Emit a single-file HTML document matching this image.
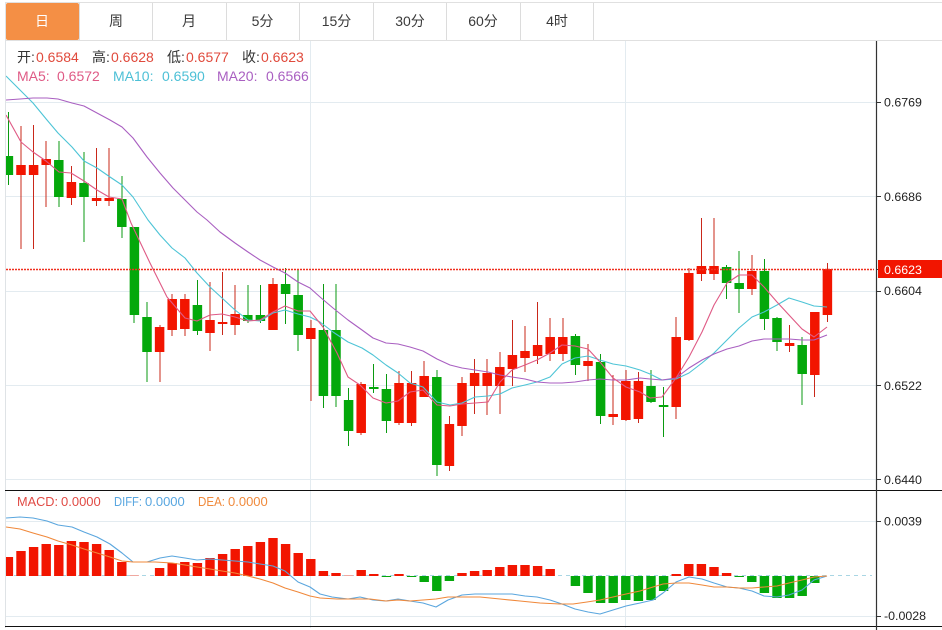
<!DOCTYPE html>
<html><head><meta charset="utf-8">
<style>
html,body{margin:0;padding:0;background:#fff;width:942px;height:630px;overflow:hidden}
svg{display:block;position:absolute;left:0;top:0}
text{font-family:"Liberation Sans","Noto Sans CJK SC",sans-serif}
.t{font-size:14px;fill:#3a3a3a;text-anchor:middle}
.l{font-size:14px}
.m{font-size:13px}
.a{font-size:12.4px;fill:#222}
.n{fill:none;stroke-width:1.1;stroke-linejoin:round}
</style></head><body>
<svg width="942" height="630" viewBox="0 0 942 630" xmlns="http://www.w3.org/2000/svg">
<defs><clipPath id="c"><rect x="6" y="41" width="870" height="589"/></clipPath></defs>
<!-- tabs -->
<path d="M5 2.500H942M5 40.500H942" stroke="#e0e0e0" stroke-width="1" fill="none"/>
<path d="M5.500 3V628" stroke="#dfe3e6" stroke-width="1" fill="none"/>
<rect x="6" y="3" width="73" height="37" rx="2" fill="#f48f45"/>
<path d="M79.500 3V40M152.500 3V40M226.500 3V40M299.500 3V40M373.500 3V40M446.500 3V40M520.500 3V40M593.500 3V40" stroke="#dcdcdc" stroke-width="1" fill="none"/>
<text x="42" y="26" class="t" style="fill:#fff">日</text>
<text x="116" y="26" class="t">周</text>
<text x="189" y="26" class="t">月</text>
<text x="262.500" y="26" class="t">5分</text>
<text x="336.500" y="26" class="t">15分</text>
<text x="410" y="26" class="t">30分</text>
<text x="483" y="26" class="t">60分</text>
<text x="557" y="26" class="t">4时</text>
<!-- grid -->
<path d="M6 102.500H876M6 196.500H876M6 291.500H876M6 385.500H876M6 479.500H876M6 521.500H876M6 616.500H876M310.500 41V628M625.500 41V628" stroke="#e3ebf0" stroke-width="1" fill="none"/>
<g clip-path="url(#c)">
<!-- wicks -->
<path fill="none" stroke="#0a9a10" stroke-width="1" d="M8.500 112V185M59 141V207M84 152V242M122 176V238M134 227V323M147 302V382M185.500 269V270M197.500 280V335M248 285V323M260.500 285V323M285.500 268V324M298 269V351M323.500 284V408M336 284V407M348.500 388V446M373.500 364V393M386.500 374V433M437 370V476M575.500 334V375M600.500 354V424M651 370V403M663.500 387V437M726.500 265V299M739 251V313M764.500 259V330M777 317V351M802 337V405"/>
<path fill="none" stroke="#c9281a" stroke-width="1" d="M21 126V249M33.500 125V249M46 141V207M71.500 166V205M96.500 148V206M109 148V206M160 325V382M172 294V336M185 294V336M210 282V351M222.500 272V335M235 285V335M273 278V330M311 320V401M361 382V435M399 371V425M411.500 371V426M424 361V397M449.500 416V471M462 377V436M474.500 359V414M487 359V415M500 352V414M512.500 320V386M525 326V372M537.500 302V364M550 318V361M563 318V361M588 344V381M613 375V425M626 370V421M638.500 372V423M676 317V419M689 268V341M701.500 218V281M714 218V280M752 255V295M789.500 325V352M814.500 312V397M827.500 263V322"/>
<!-- bodies -->
<path fill="none" stroke="#04a80b" stroke-width="9.500" d="M8.400 156V175M58.800 160V197M84 183V197M121.800 199V227M134.400 227V315M147 317V352M197.400 305V331M247.800 315V321M260.400 315V321M285.600 284V294M298.200 295V335M323.400 330V396M336 330V396M348.600 400V431M373.800 387V389M386.400 389V421M436.800 377V465M575.400 336V365M600.600 362V416M651 386V402M663.600 405V407M726.600 267V283M739.200 283V289M764.400 271V319M777 318V342M802.200 345V374"/>
<path fill="none" stroke="#f21500" stroke-width="9.500" d="M21 165V175M33.600 165V175M46.200 159V165M71.400 182V198M96.600 198V201M109.200 198V201M159.600 327V352M172.200 299V330M184.800 299V329M210 320V333M222.600 322V324M235.200 314V325M273 284V330M310.800 328V339M361.200 384V433M399 383V423M411.600 383V423M424.200 376V397M449.400 424V466M462 383V426M474.600 373V386M487.200 373V386M499.800 367V386M512.400 355V369M525 351V358M537.600 345V356M550.200 337V354M562.800 337V354M588 361V366M613.200 414V417M625.800 381V420M638.400 381V419M676.200 337V407M688.800 273V340M701.400 266V274M714 266V274M751.800 271V289M789.600 343V346M814.800 312V375M827.400 269V315"/>
<!-- MA -->
<polyline class="n" stroke="#4dc4d6" points="6,76 20,90 33,103 47,120 58,133 72,147 84,161 97,168 110,177 122,185 133,197 148,220 160,235 172,248 185,258 197,273 210,287 222,298 235,310 248,320 260,321 273,313 285,310 298,314 310,317 320,322 333,332 348,342 362,348 373,355 386,365 398,373 410,383 423,387 437,402 450,405 462,403 475,397 488,396 500,394 512,388 525,385 537,382 550,377 562,364 575,358 588,356 600,360 613,364 626,366 640,370 650,374 662,380 676,379 689,373 702,363 714,353 727,340 739,328 752,317 764,312 777,305 789,298 802,302 814,306 827,307"/>
<polyline class="n" stroke="#a95fc1" points="6,100 20,99 33,98 47,98 58,99 72,103 84,106 97,113 110,120 122,127 133,138 147,157 160,173 173,188 185,200 197,212 207,220 220,232 235,243 248,252 260,260 273,267 285,273 298,282 310,288 320,297 333,308 348,320 362,330 373,338 386,343 398,344 410,347 423,351 437,359 450,365 462,368 475,370 488,372 500,375 512,377 525,379 537,382 550,383 562,383 575,382 588,380 600,379 613,380 626,380 640,378 650,379 662,380 676,378 689,368 702,360 714,354 727,349 739,346 752,341 764,339 777,339 789,339 802,340 814,340 827,335"/>
<polyline class="n" stroke="#df5a85" points="6,115 21,142 33,152 46,161 59,172 71,173 84,181 97,190 109,197 122,199 131,223 150,263 167,297 185,318 197,321 210,315 222,314 235,317 248,321 260,320 273,312 285,306 298,311 310,311 323,327 337,353 348,377 360,385 373,398 386,403 398,401 410,392 423,390 437,405 450,406 462,404 475,403 488,402 500,382 512,370 525,365 537,360 550,353 562,345 575,346 588,349 600,362 613,378 626,387 640,392 650,398 662,397 676,378 689,357 702,332 714,305 727,283 739,275 752,275 764,287 777,302 789,315 802,329 814,337 827,327"/>
<!-- last price line -->
<path d="M6 269.500H874" stroke="#f03020" stroke-width="1.500" stroke-dasharray="2 1" fill="none"/>
<!-- MACD baseline -->
<path d="M6 575.500H872" stroke="#a9d6e4" stroke-width="1" stroke-dasharray="4 4" fill="none"/>
<!-- MACD bars -->
<path fill="none" stroke="#f21500" stroke-width="9.400" d="M8.400 557V576M21 551V576M33.600 547V576M46.200 544V576M58.800 545V576M71.400 541V576M84 542V576M96.600 544V576M109.200 550V576M121.800 562V576M159.600 568V576M172.200 563V576M184.800 562V576M197.400 563V576M210 558V576M222.600 554V576M235.200 549V576M247.800 546V576M260.400 542V576M273 538V576M285.600 544V576M298.200 553V576M310.800 559V576M323.400 571V576M336 573V576M361.200 570V576M373.800 574V576M399 574V576M462 573V576M474.600 571V576M487.200 570V576M499.800 567V576M512.400 565V576M525 565V576M537.600 566V576M550.200 569V576M676.200 574V576M688.800 564V576M701.400 564V576M714 567V576M726.600 573V576"/>
<path fill="none" stroke="#f0a8a0" stroke-width="9" d="M134.400 575V576M348.600 575V576"/>
<path fill="none" stroke="#04a80b" stroke-width="9.400" d="M386.400 576V577M411.600 576V577M424.200 576V582M436.800 576V591M449.400 576V581M575.400 576V586M588 576V593M600.600 576V603M613.200 576V603M625.800 576V600M638.400 576V601M651 576V600M663.600 576V591M739.200 576V577M751.800 576V582M764.400 576V593M777 576V598M789.600 576V598M802.200 576V596M814.800 576V583"/>
<polyline class="n" stroke="#5aa6de" points="6,518 20,517 33,518 47,521 58,525 72,527 84,532 97,537 110,544 122,553 133,562 147,562 160,558 172,556 185,558 197,560 210,559 222,560 235,561 248,562 260,564 273,566 285,571 298,582 310,587 320,594 332,597 348,599 360,597 373,600 386,601 398,599 410,601 423,603 436,607 448,600 462,595 475,594 488,594 500,594 512,594 525,596 537,597 550,600 562,604 575,609 588,612 600,614 613,610 626,606 640,603 653,600 663,593 676,582 689,577 702,579 714,583 727,587 739,588 752,591 764,596 777,597 789,595 802,590 814,580 827,576"/>
<polyline class="n" stroke="#f0883a" points="6,527 20,529 33,533 47,537 58,541 72,545 84,549 97,553 110,557 122,561 133,562 155,562 172,563 185,565 197,567 210,569 222,571 235,573 248,576 260,579 273,583 285,588 298,592 310,596 320,598 337,599 353,599 370,599 386,601 398,600 410,601 423,600 436,599 448,597 462,597 480,597 500,599 520,601 540,603 560,604 573,604 587,602 600,600 613,597 626,594 640,591 653,587 663,584 676,583 689,583 702,585 714,587 727,587 739,588 752,588 764,587 777,586 789,583 802,580 814,577 827,576"/>
</g>
<!-- frame lines -->
<path d="M5 490.500H942M5 626.500H942" stroke="#111" stroke-width="1" fill="none"/>
<path d="M876.500 41V630" stroke="#333" stroke-width="1.200" fill="none"/>
<path d="M877 102.500H881M877 196.500H881M877 291.500H881M877 385.500H881M877 479.500H881M877 521.500H881M877 616.500H881M877 269.500H881" stroke="#333" stroke-width="1" fill="none"/>
<!-- axis labels -->
<rect x="878" y="260" width="64" height="18" fill="#f21500"/>
<text x="884" y="274" class="a" style="fill:#fff">0.6623</text>
<text x="884" y="106.500" class="a">0.6769</text>
<text x="884" y="201" class="a">0.6686</text>
<text x="884" y="295" class="a">0.6604</text>
<text x="884" y="390" class="a">0.6522</text>
<text x="884" y="484" class="a">0.6440</text>
<text x="884" y="525.500" class="a">0.0039</text>
<text x="884" y="620" class="a">-0.0028</text>
<!-- info -->
<g class="l">
<text x="17" y="62" fill="#333">开:</text><text x="36" y="62" fill="#e04a3c">0.6584</text>
<text x="92" y="62" fill="#333">高:</text><text x="111" y="62" fill="#e04a3c">0.6628</text>
<text x="167" y="62" fill="#333">低:</text><text x="186" y="62" fill="#e04a3c">0.6577</text>
<text x="242" y="62" fill="#333">收:</text><text x="261" y="62" fill="#e04a3c">0.6623</text>
<text x="17" y="81" fill="#df5a85">MA5:</text><text x="57" y="81" fill="#df5a85">0.6572</text>
<text x="113" y="81" fill="#4dc0d6">MA10:</text><text x="162" y="81" fill="#4dc0d6">0.6590</text>
<text x="217" y="81" fill="#a95fc1">MA20:</text><text x="266" y="81" fill="#a95fc1">0.6566</text>
</g>
<g class="m">
<text x="17" y="506" fill="#e04a44" textLength="41" lengthAdjust="spacingAndGlyphs">MACD:</text><text x="61" y="506" fill="#e04a44">0.0000</text>
<text x="114" y="506" fill="#58a6e0" textLength="28" lengthAdjust="spacingAndGlyphs">DIFF:</text><text x="145" y="506" fill="#58a6e0">0.0000</text>
<text x="198" y="506" fill="#f08a3c" textLength="27" lengthAdjust="spacingAndGlyphs">DEA:</text><text x="228" y="506" fill="#f08a3c">0.0000</text>
</g>
</svg>
</body></html>
